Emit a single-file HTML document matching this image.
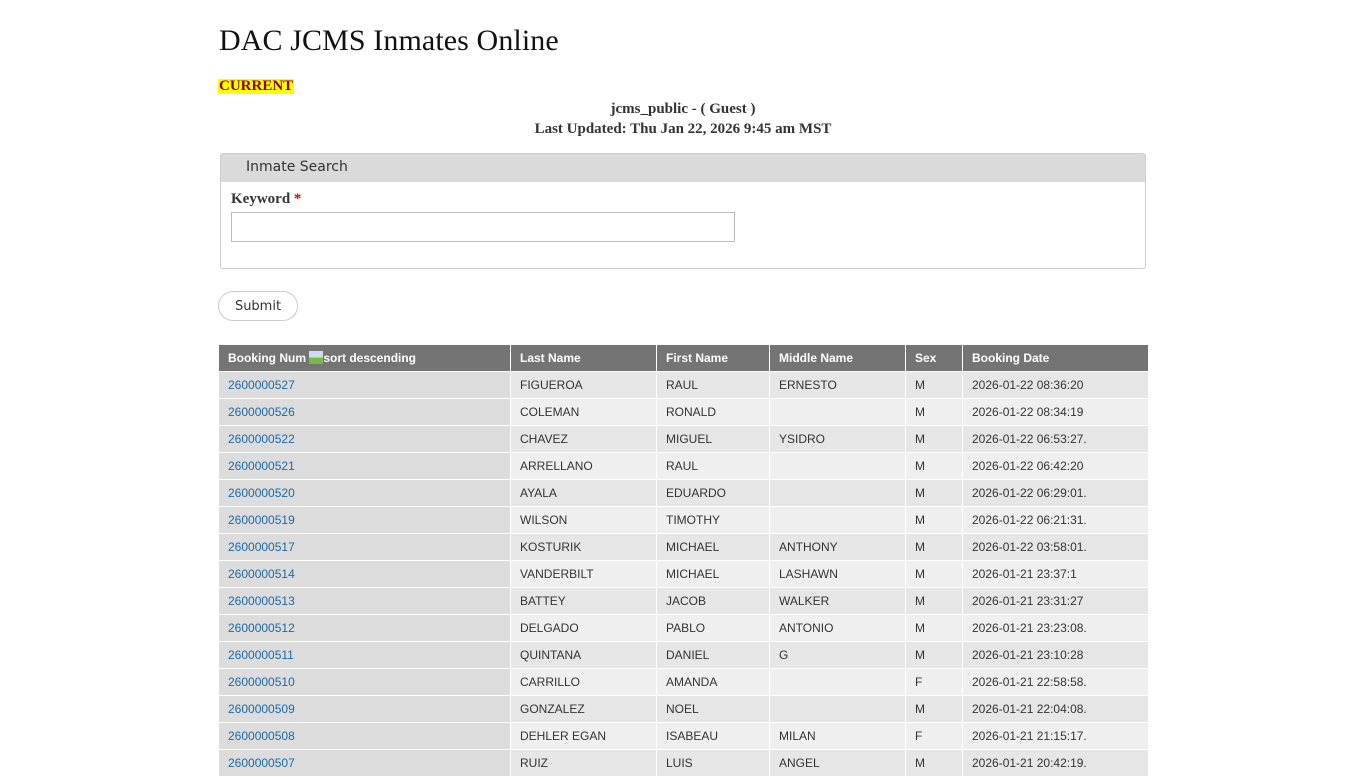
<!DOCTYPE html>
<html><head><meta charset="utf-8"><style>
body{margin:0;background:#fff;font-family:"Liberation Serif",serif;}
h1{position:absolute;left:219px;top:24px;margin:0;font-size:30px;font-weight:normal;color:#111;letter-spacing:0.1px}
.cur{position:absolute;left:218px;top:79px;background:#ff0;color:#8b0000;font-weight:bold;font-size:15px;line-height:15px;padding:0 1px}
.meta{position:absolute;left:219px;width:928px;top:99px;text-align:center;font-weight:bold;font-size:15px;color:#333;line-height:20px}
.box{position:absolute;left:220px;top:153px;width:924px;height:114px;border:1px solid #ccc;border-radius:3px;overflow:hidden}
.box .hd{background:#dadada;height:28px;line-height:27px;padding-left:25px;font-family:"DejaVu Sans",sans-serif;font-size:14px;color:#333}
.kw{position:absolute;left:10px;top:37px;font-weight:bold;font-size:15px;color:#333}
.kw span{color:#d00}
.inp{position:absolute;left:10px;top:58px;width:502px;height:28px;border:1px solid #bbb}
.btn{position:absolute;left:218px;top:291px;border:1px solid #ccc;border-radius:15px;font-family:"DejaVu Sans",sans-serif;font-size:13px;color:#333;text-align:center;line-height:29px;box-sizing:border-box;width:80px;height:30px}
table{position:absolute;left:218px;top:344px;width:930px;table-layout:fixed;border-collapse:collapse;font-family:"Liberation Sans",sans-serif;font-size:12px;color:#333}
td,th{border:1px solid #fff;padding:0 9px;height:26px;text-align:left;white-space:nowrap;overflow:hidden}
th{background:#747474;color:#fff;font-weight:bold}
tr:nth-child(odd) td{background:#e6e6e6}
tr:nth-child(even) td{background:#efefef}
tr td:first-child{background:#dcdcdc!important}
td a{color:#1a6aa8;text-decoration:none}
</style></head><body>
<h1>DAC JCMS Inmates Online</h1>
<div class="cur">CURRENT</div>
<div class="meta">jcms_public - ( Guest )<br>Last Updated: Thu Jan 22, 2026 9:45 am MST</div>
<div class="box"><div class="hd">Inmate Search</div><div class="kw">Keyword <span>*</span></div><div class="inp"></div></div>
<div class="btn">Submit</div>
<table>
<colgroup><col style="width:292px"><col style="width:146px"><col style="width:113px"><col style="width:136px"><col style="width:57px"><col style="width:186px"></colgroup>
<thead><tr><th>Booking Num <span style="display:inline-block;width:14px;height:13px;background:linear-gradient(#cde 50%,#7b4 50%);vertical-align:-2px"></span>sort descending</th><th>Last Name</th><th>First Name</th><th>Middle Name</th><th>Sex</th><th>Booking Date</th></tr></thead>
<tbody>
<tr><td><a>2600000527</a></td><td>FIGUEROA</td><td>RAUL</td><td>ERNESTO</td><td>M</td><td>2026-01-22 08:36:20</td></tr>
<tr><td><a>2600000526</a></td><td>COLEMAN</td><td>RONALD</td><td></td><td>M</td><td>2026-01-22 08:34:19</td></tr>
<tr><td><a>2600000522</a></td><td>CHAVEZ</td><td>MIGUEL</td><td>YSIDRO</td><td>M</td><td>2026-01-22 06:53:27.</td></tr>
<tr><td><a>2600000521</a></td><td>ARRELLANO</td><td>RAUL</td><td></td><td>M</td><td>2026-01-22 06:42:20</td></tr>
<tr><td><a>2600000520</a></td><td>AYALA</td><td>EDUARDO</td><td></td><td>M</td><td>2026-01-22 06:29:01.</td></tr>
<tr><td><a>2600000519</a></td><td>WILSON</td><td>TIMOTHY</td><td></td><td>M</td><td>2026-01-22 06:21:31.</td></tr>
<tr><td><a>2600000517</a></td><td>KOSTURIK</td><td>MICHAEL</td><td>ANTHONY</td><td>M</td><td>2026-01-22 03:58:01.</td></tr>
<tr><td><a>2600000514</a></td><td>VANDERBILT</td><td>MICHAEL</td><td>LASHAWN</td><td>M</td><td>2026-01-21 23:37:1</td></tr>
<tr><td><a>2600000513</a></td><td>BATTEY</td><td>JACOB</td><td>WALKER</td><td>M</td><td>2026-01-21 23:31:27</td></tr>
<tr><td><a>2600000512</a></td><td>DELGADO</td><td>PABLO</td><td>ANTONIO</td><td>M</td><td>2026-01-21 23:23:08.</td></tr>
<tr><td><a>2600000511</a></td><td>QUINTANA</td><td>DANIEL</td><td>G</td><td>M</td><td>2026-01-21 23:10:28</td></tr>
<tr><td><a>2600000510</a></td><td>CARRILLO</td><td>AMANDA</td><td></td><td>F</td><td>2026-01-21 22:58:58.</td></tr>
<tr><td><a>2600000509</a></td><td>GONZALEZ</td><td>NOEL</td><td></td><td>M</td><td>2026-01-21 22:04:08.</td></tr>
<tr><td><a>2600000508</a></td><td>DEHLER EGAN</td><td>ISABEAU</td><td>MILAN</td><td>F</td><td>2026-01-21 21:15:17.</td></tr>
<tr><td><a>2600000507</a></td><td>RUIZ</td><td>LUIS</td><td>ANGEL</td><td>M</td><td>2026-01-21 20:42:19.</td></tr>
</tbody></table>
</body></html>
